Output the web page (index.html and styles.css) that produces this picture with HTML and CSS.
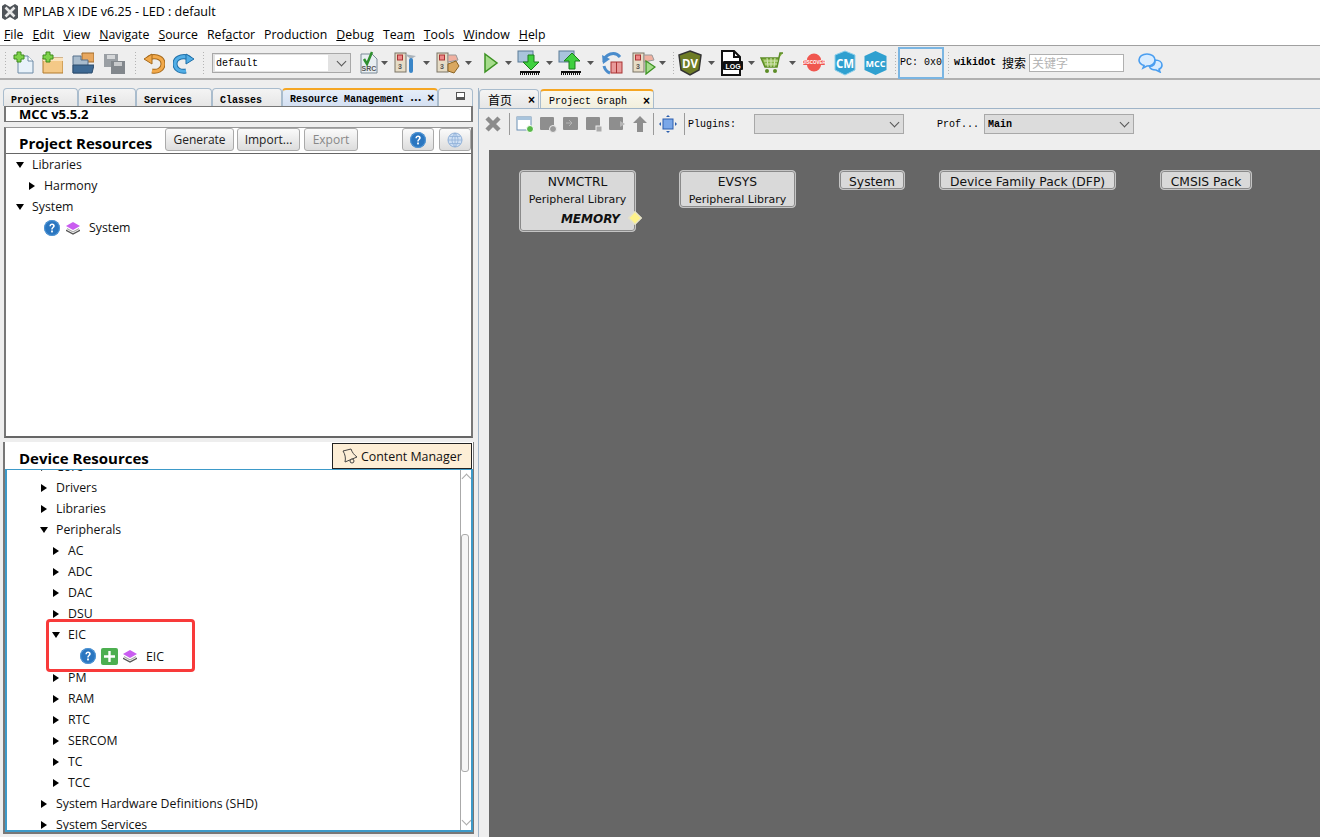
FILE: index.html
```html
<!DOCTYPE html>
<html lang="en">

<head>
  <meta charset="UTF-8">
  <meta name="viewport" content="width=device-width, initial-scale=1.0">
  <title>MPLAB X IDE v6.25 - LED : default</title>
  <link rel="stylesheet" href="styles.css">
</head>

<body>
  <svg class="defs" width="0" height="0">
    <symbol id="help" viewBox="0 0 16 16">
      <circle cx="8" cy="8" r="8" fill="#2a76c0" />
      <circle cx="8" cy="8" r="7.4" fill="none" stroke="#5c9fdc" stroke-width=".8" />
      <path d="M5.4 6.2C5.5 4.4 6.6 3.5 8.1 3.5c1.600 0 2.700 1 2.700 2.300 0 1.900-2.100 1.900-2.100 3.700H7.200C7.200 7.300 9 7.300 9 5.900 9 5.300 8.600 4.900 8 4.900c-.7 0-1 .5-1.100 1.300z" fill="#fff" />
      <rect x="7.100" y="10.500" width="1.800" height="1.900" fill="#fff" />
    </symbol>
    <symbol id="layers" viewBox="0 0 16 16">
      <path d="M1 9.500l7 3.800 7-3.800v1.500l-7 3.800-7-3.800z" fill="#555" />
      <path d="M2 8l6 3.300L14 8v1.200l-6 3.200-6-3.200z" fill="#aaa" />
      <path d="M1 6l7-4 7 4-7 4z" fill="#c95cf0" />
    </symbol>
    <symbol id="drop" viewBox="0 0 7 4">
      <path d="M0 0h7L3.500 4z" fill="#555" />
    </symbol>
  </svg>

  <header class="titlebar">
    <svg width="16" height="16" viewBox="0 0 16 16">
      <path d="M0 2l3-2 5 3 5-3 3 2v12l-3 2-5-3-5 3-3-2z" fill="#4f5459" />
      <path d="M3.500 3.500l9 9M12.500 3.500l-9 9" stroke="#e8e8e8" stroke-width="2.600" />
    </svg>
    <span>MPLAB X IDE v6.25 - LED : default</span>
  </header>

  <nav class="menubar">
    <a><u>F</u>ile</a>
    <a><u>E</u>dit</a>
    <a><u>V</u>iew</a>
    <a><u>N</u>avigate</a>
    <a><u>S</u>ource</a>
    <a>Ref<u>a</u>ctor</a>
    <a>Production</a>
    <a><u>D</u>ebug</a>
    <a>Tea<u>m</u></a>
    <a><u>T</u>ools</a>
    <a><u>W</u>indow</a>
    <a><u>H</u>elp</a>
  </nav>

  <div class="toolbar">
    <i class="grip"></i>
    <svg class="ml6" width="22" height="24" viewBox="0 0 22 24">
      <path d="M5 5h10l5 5v12H5z" fill="#e8f2fa" stroke="#6d8aa5" />
      <path d="M15 5v5h5" fill="#fff" stroke="#6d8aa5" />
      <path d="M4 1h4v3h3v4H8v3H4V8H1V4h3z" fill="#7ed34a" stroke="#3f8a1d" />
    </svg>
    <svg class="ml6" width="22" height="24" viewBox="0 0 22 24">
      <path d="M2 7h20v15H2z" fill="#f4c987" stroke="#b27a2c" />
      <path d="M2 7h20v3H2z" fill="#fbe3bd" />
      <path d="M5 1h4v3h3v4H9v3H5V8H2V4h3z" fill="#7ed34a" stroke="#3f8a1d" />
    </svg>
    <svg class="ml9" width="22" height="24" viewBox="0 0 22 24">
      <path d="M10 2h12v9H10z" fill="#e8a860" stroke="#a06b2a" />
      <path d="M1 5h8v4h7v13H1z" fill="#a9bccd" stroke="#56718c" />
      <path d="M1 14h21l-2 8H1z" fill="#3f6a94" stroke="#2d4c6c" />
    </svg>
    <svg class="ml9" width="22" height="24" viewBox="0 0 22 24">
      <rect x="1" y="3" width="14" height="13" fill="#9a9fa4" />
      <rect x="4" y="4" width="8" height="4" fill="#d5d7d9" />
      <rect x="8" y="10" width="14" height="13" fill="#82878c" />
      <rect x="11" y="11" width="8" height="4" fill="#c8cacc" />
    </svg>
    <i class="grip ml9"></i>
    <svg class="ml6" width="22" height="24" viewBox="0 0 22 24">
      <path d="M5 8c4-4 15-3 15 5 0 6-6 8-11 7" fill="none" stroke="#a66a1c" stroke-width="5" />
      <path d="M5 8c4-4 15-3 15 5 0 6-6 8-11 7" fill="none" stroke="#f2a94a" stroke-width="3" />
      <path d="M1 8l8-5v10z" fill="#f2a94a" stroke="#a66a1c" />
    </svg>
    <svg class="ml8" width="22" height="24" viewBox="0 0 22 24">
      <path d="M17 8c-4-4-15-3-15 5 0 6 6 8 11 7" fill="none" stroke="#1f6fa8" stroke-width="5" />
      <path d="M17 8c-4-4-15-3-15 5 0 6 6 8 11 7" fill="none" stroke="#52aee6" stroke-width="3" />
      <path d="M21 8l-8-5v10z" fill="#52aee6" stroke="#1f6fa8" />
    </svg>
    <i class="grip ml7"></i>
    <div class="combo combo-config ml7"><span class="combo-text">default</span><b class="chev"></b></div>
    <svg class="ml9" width="18" height="24" viewBox="0 0 18 24">
      <path d="M1 3h11l5 5v14H1z" fill="#e8eef2" stroke="#7a8a96" />
      <text x="1.500" y="20" class="icon-tag">SRC</text>
      <path d="M4 8l3 5 5-12" fill="none" stroke="#2f8f2f" stroke-width="2.500" />
    </svg>
    <svg class="arrow ml3" width="7" height="4"><use href="#drop" /></svg>
    <svg class="ml6" width="24" height="24" viewBox="0 0 24 24">
      <rect x="1" y="2" width="11" height="19" fill="#e6dcc6" stroke="#7a7466" />
      <rect x="3.500" y="4" width="5" height="5" fill="#e88" stroke="#a33" />
      <text x="4" y="18" class="icon-tag">3</text>
      <path d="M10 3l12 2-5 3z" fill="#aab2ba" />
      <rect x="15" y="7" width="4" height="15" rx="2" fill="#3a86c8" />
    </svg>
    <svg class="arrow ml5" width="7" height="4"><use href="#drop" /></svg>
    <svg class="ml6" width="24" height="24" viewBox="0 0 24 24">
      <rect x="1" y="2" width="11" height="19" fill="#e6dcc6" stroke="#7a7466" />
      <rect x="3.500" y="4" width="5" height="5" fill="#e88" stroke="#a33" />
      <text x="4" y="18" class="icon-tag">3</text>
      <path d="M12 4h8l2 5-10 2z" fill="#f0b0a0" stroke="#999" />
      <path d="M12 13l8-3 3 5-5 7-6-2z" fill="#d9a860" stroke="#8a6424" />
    </svg>
    <svg class="arrow ml5" width="7" height="4"><use href="#drop" /></svg>
    <svg class="ml11" width="16" height="24" viewBox="0 0 16 24">
      <path d="M2 3l12 9-12 9z" fill="#a6dc8c" stroke="#3c9222" stroke-width="1.500" />
    </svg>
    <svg class="arrow ml6" width="7" height="4"><use href="#drop" /></svg>
    <svg class="ml5" width="26" height="26" viewBox="0 0 26 26">
      <rect x="1" y="1" width="15" height="11" fill="#a9c4dc" stroke="#5a7a96" />
      <path d="M11 5h6v7h5l-8 8-8-8h5z" fill="#3fd03f" stroke="#1c7f1c" />
      <rect x="3" y="21" width="20" height="2" fill="#111" />
      <path d="M3 24h20" stroke="#111" stroke-dasharray="1 1" stroke-width="2" />
    </svg>
    <svg class="arrow ml3" width="7" height="4"><use href="#drop" /></svg>
    <svg class="ml5" width="26" height="26" viewBox="0 0 26 26">
      <rect x="1" y="1" width="15" height="11" fill="#a9c4dc" stroke="#5a7a96" />
      <path d="M14 3l8 8h-5v8h-6v-8H6z" fill="#3fd03f" stroke="#1c7f1c" />
      <rect x="3" y="21" width="20" height="2" fill="#111" />
      <path d="M3 24h20" stroke="#111" stroke-dasharray="1 1" stroke-width="2" />
    </svg>
    <svg class="arrow ml3" width="7" height="4"><use href="#drop" /></svg>
    <svg class="ml6" width="24" height="24" viewBox="0 0 24 24">
      <path d="M4 11A9 9 0 0 1 20 6" fill="none" stroke="#4a8ccc" stroke-width="3" />
      <path d="M2 4l1 9 7-5z" fill="#4a8ccc" />
      <path d="M4 15c1 4 3 6 6 7" fill="none" stroke="#4a8ccc" stroke-width="3" />
      <rect x="11" y="11" width="11" height="11" fill="#e89a9a" stroke="#a33" />
      <path d="M16.500 11v11" stroke="#a33" />
    </svg>
    <svg class="ml8" width="24" height="24" viewBox="0 0 24 24">
      <rect x="1" y="2" width="11" height="19" fill="#e6dcc6" stroke="#7a7466" />
      <rect x="3.500" y="4" width="5" height="5" fill="#e88" stroke="#a33" />
      <text x="4" y="18" class="icon-tag">3</text>
      <path d="M12 4h8l2 5-10 2z" fill="#f0b0a0" stroke="#999" />
      <path d="M14 10l9 6-9 7z" fill="#a6dc8c" stroke="#3c9222" stroke-width="1.300" />
    </svg>
    <svg class="arrow ml3" width="7" height="4"><use href="#drop" /></svg>
    <i class="grip ml6"></i>
    <svg class="ml3" width="24" height="26" viewBox="0 0 24 26">
      <path d="M12 1l11 4-2 15-9 5-9-5L1 5z" fill="#6d7c25" stroke="#333" stroke-width="1.500" />
      <text x="12" y="18" class="icon-badge">DV</text>
    </svg>
    <svg class="arrow ml6" width="7" height="4"><use href="#drop" /></svg>
    <svg class="ml4" width="24" height="26" viewBox="0 0 24 26">
      <path d="M3 1h12l6 6v18H3z" fill="#fff" stroke="#111" stroke-width="2" />
      <path d="M15 1v6h6" fill="none" stroke="#111" stroke-width="2" />
      <rect x="4" y="11" width="20" height="9" rx="1" fill="#111" />
      <text x="14" y="18.500" class="icon-log">LOG</text>
    </svg>
    <svg class="arrow ml5" width="7" height="4"><use href="#drop" /></svg>
    <svg class="ml5" width="24" height="24" viewBox="0 0 24 24">
      <path d="M23 2h-3l-3 14H5L1 7h18" fill="#8dbb4d" stroke="#5c8c26" stroke-width="1.500" />
      <path d="M4 10h14M5 13h12M7 7l1 9M11 7v9M15 7l-1 9" stroke="#d6e6b8" />
      <circle cx="7" cy="20" r="2" fill="#5c8c26" />
      <circle cx="15" cy="20" r="2" fill="#5c8c26" />
    </svg>
    <svg class="arrow ml5" width="7" height="4"><use href="#drop" /></svg>
    <svg class="ml6" width="24" height="24" viewBox="0 0 24 24">
      <path d="M5 9a7 6.500 0 0 1 14 0zM5 14h14a7 6.500 0 0 1-14 0z" fill="#f0564f" />
      <rect x="1" y="9" width="22" height="5" rx="1" fill="#f0564f" />
      <text x="12" y="13" class="icon-tiny">DISCOVER</text>
    </svg>
    <svg class="ml7" width="24" height="26" viewBox="0 0 24 26">
      <path d="M12 1l10 4v15l-10 5-10-5V5z" fill="#2fa0d0" stroke="#8ed0ec" />
      <text x="12" y="17.500" class="icon-badge">CM</text>
    </svg>
    <svg class="ml6" width="25" height="26" viewBox="0 0 25 26">
      <path d="M12.500 1l11 5v14l-11 5-11-5V6z" fill="#2fa0d0" />
      <text x="12.500" y="17" class="icon-badge icon-narrow">MCC</text>
    </svg>
    <i class="grip ml6"></i>
    <div class="pc-box ml1"><span>PC:</span><span>0x0</span></div>
    <i class="grip ml3"></i>
    <span class="wiki ml4">wikidot</span>
    <span class="search-label ml6">搜索</span>
    <input class="search-box ml3" type="text" placeholder="关键字">
    <svg class="ml14" width="25" height="20" viewBox="0 0 25 20">
      <path d="M9 1c4.500 0 8 2.500 8 6s-3.500 6-8 6l-4 2 1-2.500C3 11.500 1 9.500 1 7c0-3.500 3.500-6 8-6z" fill="#d8ecff" stroke="#4a9ef0" stroke-width="1.600" />
      <path d="M17 7c4 0 7 2 7 5 0 2-1 3.500-3 4.300l1 2.700-4-2c-3.500 0-6-1.500-6.500-3.500 4 0 6-2.500 5.500-6.500z" fill="#d8ecff" stroke="#4a9ef0" stroke-width="1.600" />
    </svg>
  </div>

  <main class="workspace">
    <section class="left">
      <div class="tabs left-tabs">
        <div class="tab tab-projects">Projects</div>
        <div class="tab tab-files">Files</div>
        <div class="tab tab-services">Services</div>
        <div class="tab tab-classes">Classes</div>
        <div class="tab tab-active tab-resource"><span>Resource Management</span><b class="dots">•••</b><b class="close">×</b></div>
        <div class="tab-end"><i class="minimize"></i></div>
      </div>

      <div class="mcc-bar">MCC v5.5.2</div>

      <div class="panel project-panel">
        <div class="panel-head">
          <h2>Project Resources</h2>
          <div class="head-buttons">
            <button class="btn btn-generate">Generate</button>
            <button class="btn btn-import">Import...</button>
            <button class="btn btn-export" disabled>Export</button>
            <button class="btn btn-icon btn-help"><svg width="16" height="16"><use href="#help" /></svg></button>
            <button class="btn btn-icon btn-globe">
              <svg width="16" height="16" viewBox="0 0 16 16">
                <circle cx="8" cy="8" r="7" fill="#cfe0f4" stroke="#8fb0d8" />
                <path d="M1 8h14M2.500 4.500h11M2.500 11.500h11M8 1v14M8 1C4 5 4 11 8 15M8 1c4 4 4 10 0 14" fill="none" stroke="#8fb0d8" stroke-width=".8" />
              </svg>
            </button>
          </div>
        </div>
        <div class="tree tree-project">
          <div class="row p0"><i class="tri-down"></i><span>Libraries</span></div>
          <div class="row p1"><i class="tri-right"></i><span>Harmony</span></div>
          <div class="row p0"><i class="tri-down"></i><span>System</span></div>
          <div class="row p2">
            <svg class="ic" width="16" height="16"><use href="#help" /></svg>
            <svg class="ic ic-layers" width="16" height="16"><use href="#layers" /></svg>
            <span class="leaf">System</span>
          </div>
        </div>
      </div>

      <div class="panel device-panel">
        <div class="panel-head device-head">
          <h2>Device Resources</h2>
          <button class="content-manager">
            <svg width="18" height="16" viewBox="0 0 18 16">
              <path d="M3 3l8-2c1 3 3 6 6 8l-12 5C6 10 5 6 3 3z" fill="none" stroke="#444" />
              <circle cx="12" cy="13" r="2" fill="#fdeed6" stroke="#444" />
            </svg>
            <span>Content Manager</span>
          </button>
        </div>
        <div class="device-body">
          <div class="tree tree-device">
            <div class="row d0"><i class="tri-right"></i><span>Core</span></div>
            <div class="row d0"><i class="tri-right"></i><span>Drivers</span></div>
            <div class="row d0"><i class="tri-right"></i><span>Libraries</span></div>
            <div class="row d0"><i class="tri-down"></i><span>Peripherals</span></div>
            <div class="row d1"><i class="tri-right"></i><span>AC</span></div>
            <div class="row d1"><i class="tri-right"></i><span>ADC</span></div>
            <div class="row d1"><i class="tri-right"></i><span>DAC</span></div>
            <div class="row d1"><i class="tri-right"></i><span>DSU</span></div>
            <div class="row d1"><i class="tri-down"></i><span>EIC</span></div>
            <div class="row d2">
              <svg class="ic" width="16" height="16"><use href="#help" /></svg>
              <svg class="ic ic-add" width="17" height="17" viewBox="0 0 17 17">
                <rect width="17" height="17" rx="2" fill="#4caf50" />
                <path d="M8.500 3v11M3 8.500h11" stroke="#fff" stroke-width="2.400" />
              </svg>
              <svg class="ic ic-layers-small" width="16" height="16"><use href="#layers" /></svg>
              <span class="leaf">EIC</span>
            </div>
            <div class="row d1"><i class="tri-right"></i><span>PM</span></div>
            <div class="row d1"><i class="tri-right"></i><span>RAM</span></div>
            <div class="row d1"><i class="tri-right"></i><span>RTC</span></div>
            <div class="row d1"><i class="tri-right"></i><span>SERCOM</span></div>
            <div class="row d1"><i class="tri-right"></i><span>TC</span></div>
            <div class="row d1"><i class="tri-right"></i><span>TCC</span></div>
            <div class="row d0"><i class="tri-right"></i><span>System Hardware Definitions (SHD)</span></div>
            <div class="row d0"><i class="tri-right"></i><span>System Services</span></div>
          </div>
          <div class="scrollbar">
            <b class="chev chev-up"></b>
            <div class="scroll-track"><div class="scroll-thumb"></div></div>
            <b class="chev"></b>
          </div>
          <div class="highlight"></div>
        </div>
      </div>
    </section>

    <section class="right">
      <div class="tabs right-tabs">
        <div class="tab tab-home"><span class="cjk">首页</span><b class="close">×</b></div>
        <div class="tab tab-active tab-graph"><span>Project Graph</span><b class="close">×</b></div>
      </div>
      <div class="graph-toolbar">
        <svg width="18" height="18" viewBox="0 0 18 18">
          <path d="M3 3l12 12M15 3L3 15" stroke="#8c8c8c" stroke-width="4.500" />
        </svg>
        <i class="vsep vsep-first"></i>
        <svg class="g-first" width="18" height="18" viewBox="0 0 18 18">
          <rect x="1" y="2" width="14" height="13" fill="#fff" stroke="#6b8fb4" />
          <rect x="1" y="2" width="14" height="3" fill="#a9c4dc" />
          <circle cx="14" cy="14" r="3.500" fill="#58b848" stroke="#fff" />
        </svg>
        <svg class="g-icon" width="18" height="18" viewBox="0 0 18 18">
          <rect x="1" y="2" width="14" height="13" rx="1" fill="#8e8e8e" />
          <circle cx="14" cy="14" r="3.500" fill="#9a9a9a" stroke="#eee" />
        </svg>
        <svg class="g-icon" width="18" height="18" viewBox="0 0 18 18">
          <rect x="1" y="2" width="15" height="13" rx="1" fill="#8e8e8e" />
          <path d="M4 8h5M7 5l3 3-3 3" stroke="#b5b5b5" fill="none" />
        </svg>
        <svg class="g-icon" width="18" height="18" viewBox="0 0 18 18">
          <rect x="1" y="2" width="14" height="13" rx="1" fill="#8e8e8e" />
          <rect x="11" y="11" width="6" height="6" fill="#aaa" stroke="#eee" />
        </svg>
        <svg class="g-icon" width="18" height="18" viewBox="0 0 18 18">
          <rect x="1" y="2" width="14" height="13" rx="1" fill="#8e8e8e" />
          <path d="M17 9l-5 3V6z" fill="#b5b5b5" />
        </svg>
        <svg class="g-icon" width="18" height="18" viewBox="0 0 18 18">
          <path d="M9 1l7 7h-4v9H6V8H2z" fill="#8e8e8e" />
        </svg>
        <i class="vsep vsep-mid"></i>
        <svg class="g-fit" width="18" height="18" viewBox="0 0 18 18">
          <rect x="4" y="4" width="10" height="10" fill="#7aa7e8" stroke="#2c5fae" />
          <path d="M9 0l2 2H7zM9 18l2-2H7zM0 9l2-2v4zM18 9l-2-2v4z" fill="#2c5fae" />
        </svg>
        <i class="vsep vsep-last"></i>
        <span class="g-label">Plugins:</span>
        <div class="combo combo-plugins"><span class="combo-text"></span><b class="chev"></b></div>
        <span class="g-label g-prof">Prof...</span>
        <div class="combo combo-main"><span class="combo-text">Main</span><b class="chev"></b></div>
      </div>
      <div class="canvas">
        <div class="node node-nvm">
          <div class="node-title">NVMCTRL</div>
          <div class="node-sub">Peripheral Library</div>
          <div class="node-cap">MEMORY</div>
          <i class="port"></i>
        </div>
        <div class="node node-evsys">
          <div class="node-title">EVSYS</div>
          <div class="node-sub">Peripheral Library</div>
        </div>
        <div class="node node-system"><div class="node-title">System</div></div>
        <div class="node node-dfp"><div class="node-title">Device Family Pack (DFP)</div></div>
        <div class="node node-cmsis"><div class="node-title">CMSIS Pack</div></div>
      </div>
    </section>
  </main>
</body>

</html>
```

FILE: styles.css
```css
html {
  font-family: "Open Sans", "Noto Sans CJK SC", sans-serif;
}

body {
  margin: 0;
  width: 1320px;
  height: 837px;
  overflow: hidden;
  background-color: #eeeeee;
  color: #000;
  font-size: 12.3px;
}

.defs {
  position: absolute;
}

svg {
  flex: none;
  display: block;
}

/* spacing helpers for the toolbar */
.ml1 { margin-left: 1px; }
.ml3 { margin-left: 3px; }
.ml4 { margin-left: 4px; }
.ml5 { margin-left: 5px; }
.ml6 { margin-left: 6px; }
.ml7 { margin-left: 7px; }
.ml8 { margin-left: 8px; }
.ml9 { margin-left: 9px; }
.ml11 { margin-left: 11px; }
.ml14 { margin-left: 14px; }

/* title and menu */
.titlebar {
  height: 23px;
  background-color: #fff;
  display: flex;
  align-items: center;
  gap: 5px;
  padding-left: 2px;
  font-size: 12.5px;
}

.menubar {
  height: 22px;
  background-color: #fff;
  border-bottom: 1px solid #a0a0a0;
  display: flex;
  align-items: center;
  gap: 9px;
  padding-left: 4px;
  font-size: 12.3px;
}

/* main toolbar */
.toolbar {
  height: 31px;
  padding: 1px 0 0 4px;
  border-bottom: 2px solid #b0b0b0;
  display: flex;
  align-items: center;
}

.grip {
  width: 3px;
  height: 24px;
  flex: none;
  background-image: radial-gradient(#b4b4b4 1px, transparent 1px);
  background-size: 3px 3px;
}

.combo {
  height: 20px;
  box-sizing: border-box;
  border: 1px solid #a8a8a8;
  background-color: #e2e2e2;
  display: flex;
  align-items: center;
  justify-content: space-between;
  font-family: "Liberation Mono", monospace;
  font-size: 10px;
  flex: none;
}

.combo-text {
  padding-left: 3px;
}

.combo-config {
  width: 139px;
}

.combo-config .combo-text {
  background-color: #fff;
  width: 113px;
  box-sizing: border-box;
  height: 16px;
  line-height: 18px;
  margin-left: 2px;
  padding-left: 1px;
}

.chev {
  width: 6px;
  height: 6px;
  border-right: 1px solid #555;
  border-bottom: 1px solid #555;
  transform: rotate(45deg);
  margin: -3px 5px 0;
  flex: none;
}

.chev-up {
  transform: rotate(225deg);
  margin: 2px 0 0;
  border-color: #aaa;
}

.icon-tag {
  font-family: "Liberation Sans", sans-serif;
  font-size: 7px;
  font-weight: bold;
  fill: #555;
}

.icon-badge {
  font-family: "Open Sans", sans-serif;
  font-size: 11.500px;
  font-weight: bold;
  fill: #fff;
  text-anchor: middle;
}

.icon-narrow {
  font-size: 9px;
}

.icon-log {
  font-family: "Liberation Sans", sans-serif;
  font-size: 7px;
  font-weight: bold;
  fill: #fff;
  text-anchor: middle;
}

.icon-tiny {
  font-family: "Liberation Sans", sans-serif;
  font-size: 4.500px;
  font-weight: bold;
  fill: #fff;
  text-anchor: middle;
}

.pc-box {
  width: 46px;
  height: 32px;
  box-sizing: border-box;
  border: 2px solid #7ab5e2;
  display: flex;
  align-items: center;
  justify-content: space-between;
  font-family: "Liberation Mono", monospace;
  font-size: 10px;
  flex: none;
}

.wiki {
  font-family: "Liberation Mono", monospace;
  font-size: 10px;
  font-weight: bold;
}

.search-label {
  font-size: 12px;
  font-family: "Noto Sans CJK SC", sans-serif;
}

.search-box {
  width: 95px;
  height: 18px;
  box-sizing: border-box;
  border: 1px solid #b0b0b0;
  padding: 0 2px;
  font-family: "Noto Sans CJK SC", sans-serif;
  font-size: 12px;
  outline: none;
}

.search-box::placeholder {
  color: #b4b4b4;
}

/* workspace */
.workspace {
  display: flex;
  height: 757px;
  gap: 4px;
  padding: 8px 0 0 3px;
  box-sizing: border-box;
}

.left {
  width: 471px;
  flex: none;
}

.right {
  flex: 1;
  display: flex;
  flex-direction: column;
  border-left: 1px solid #9fb4c8;
}

.tabs {
  display: flex;
  height: 18px;
  font-family: "Liberation Mono", monospace;
  font-size: 10px;
  font-weight: bold;
}

.left-tabs {
  margin-right: 1px;
}

.tab {
  box-sizing: border-box;
  border: 1px solid #a9bccd;
  border-bottom: none;
  border-radius: 4px 4px 0 0;
  background: linear-gradient(#f4f4f4, #e6e6e6);
  padding: 6px 0 0 7px;
}

.tab-projects { width: 75px; }
.tab-files { width: 58px; }
.tab-services { width: 76px; }
.tab-classes { width: 70px; }

.tab-active {
  border-top: 2px solid #f5a623;
  padding-top: 3px;
}

.tab-resource {
  width: 156px;
  background: linear-gradient(#e6eef9, #d4e0f2);
  white-space: nowrap;
  display: flex;
  align-items: baseline;
}

.dots {
  font-size: 7px;
  letter-spacing: -.5px;
  margin-left: 6px;
}

.close {
  font-family: "Liberation Sans", sans-serif;
  font-size: 12px;
  line-height: 10px;
}

.tab-resource .close {
  margin-left: 6px;
}

.tab-end {
  flex: 1;
  box-sizing: border-box;
  border: 1px solid #a9bccd;
  border-bottom: none;
  border-radius: 4px 4px 0 0;
  background-color: #f0f0f0;
  display: flex;
  justify-content: flex-end;
  padding: 3px 7px 0 0;
}

.minimize {
  width: 9px;
  height: 8px;
  border: 1px solid #555;
  box-sizing: border-box;
  border-bottom-width: 3px;
  background-color: #fff;
}

.mcc-bar {
  height: 16px;
  box-sizing: border-box;
  background-color: #fff;
  border: 1px solid #777;
  border-width: 1px 2px;
  margin: 0 1px;
  padding-left: 13px;
  font-weight: bold;
  font-size: 13px;
  line-height: 14px;
  color: #000;
}

.panel {
  margin-left: 1px;
  background-color: #fff;
  border: 1px solid #777;
  border-width: 0 2px;
}

.project-panel {
  margin: 5px 1px 0;
  height: 311px;
  box-sizing: border-box;
  border-bottom: 2px solid #666;
  border-top: 1px solid #999;
}

.panel-head {
  height: 25px;
  display: flex;
  justify-content: space-between;
  align-items: flex-start;
  border-bottom: 1px solid #666;
  box-sizing: content-box;
}

h2 {
  margin: 0;
  padding: 5px 0 0 13px;
  font-size: 15px;
  font-weight: bold;
  line-height: 20px;
}

.head-buttons {
  display: flex;
  gap: 3px;
}

.btn {
  height: 23px;
  box-sizing: border-box;
  border: 1px solid #aaa;
  border-radius: 3px;
  background: linear-gradient(#fbfbfb, #dcdcdc);
  font-family: "Open Sans", sans-serif;
  font-size: 12px;
  padding: 0;
  color: #222;
}

.btn-generate { width: 69px; }
.btn-import { width: 63px; }
.btn-export { width: 54px; margin-left: 1px; color: #888; }
.btn-icon { width: 32px; display: flex; align-items: center; justify-content: center; }
.btn-help { margin-left: 41px; }
.btn-globe { margin-left: 2px; }

.row {
  height: 21px;
  display: flex;
  align-items: center;
  white-space: nowrap;
  color: #111;
}

.row span {
  line-height: 21px;
}

.tri-down {
  width: 0;
  height: 0;
  border: 4px solid transparent;
  border-top: 6px solid #000;
  border-bottom: none;
  margin-right: 8px;
  flex: none;
}

.tri-right {
  width: 0;
  height: 0;
  border: 4px solid transparent;
  border-left: 6px solid #000;
  border-right: none;
  margin: 0 9px 0 1px;
  flex: none;
}

.p0 { padding-left: 10px; }
.p1 { padding-left: 22px; }
.p2 { padding-left: 38px; }

.ic-layers { margin-left: 5px; }
.leaf { margin-left: 8px; }

.device-panel {
  margin: 4px 0 0;
  height: 392px;
  box-sizing: border-box;
  border-color: #777;
  border-width: 0 1px 2px 2px;
}

.device-head {
  height: 26px;
  border-bottom: none;
  padding-top: 1px;
  align-items: stretch;
}

.device-head h2 {
  padding: 5px 0 0 14px;
}

.content-manager {
  width: 140px;
  height: 26px;
  margin-right: 1px;
  box-sizing: border-box;
  border: 1px solid #222;
  background-color: #fdeed6;
  display: flex;
  align-items: center;
  gap: 3px;
  padding: 0 0 0 7px;
  font-family: "Open Sans", sans-serif;
  font-size: 12.4px;
  color: #111;
}

.device-body {
  position: relative;
  height: 363px;
  box-sizing: border-box;
  display: flex;
  overflow: hidden;
  border: 2px solid #3d9ac9;
  border-width: 1px 2px 2px;
}

.tree-device {
  flex: 1;
  margin-top: -14px;
}

.d0 { padding-left: 33px; }
.d1 { padding-left: 45px; }
.d2 { padding-left: 73px; height: 22px; }

.d2 .ic-add { margin-left: 5px; }
.d2 .ic-layers-small { margin-left: 4px; }

.scrollbar {
  width: 11px;
  flex: none;
  border-left: 1px solid #aaa;
  display: flex;
  flex-direction: column;
  align-items: center;
  padding-top: 3px;
  box-sizing: border-box;
}

.scroll-track {
  flex: 1;
  width: 100%;
  padding-top: 52px;
  box-sizing: border-box;
}

.scroll-thumb {
  width: 8px;
  height: 238px;
  box-sizing: border-box;
  border: 1px solid #aaa;
  border-radius: 3px;
  background-color: #f6f6f6;
}

.scrollbar .chev:last-child {
  margin: 0 0 6px;
  border-color: #aaa;
}

.highlight {
  position: absolute;
  left: 39px;
  top: 149px;
  width: 149px;
  height: 53px;
  box-sizing: border-box;
  border: 3px solid #f83a3a;
  border-radius: 4px;
}

/* right side */
.right-tabs {
  height: 19px;
  font-weight: normal;
  margin-top: 1px;
}

.tab-home {
  width: 60px;
  display: flex;
  justify-content: space-between;
  padding: 2px 3px 0 8px;
}

.tab-home .close {
  padding-top: 3px;
}

.cjk {
  font-family: "Noto Sans CJK SC", sans-serif;
  font-size: 12px;
  line-height: 15px;
}

.tab-graph {
  width: 114px;
  margin-left: 1px;
  display: flex;
  justify-content: space-between;
  padding: 5px 3px 0 8px;
  background: linear-gradient(#faf8ee, #f2efdd);
  border-color: #a9bccd;
  border-top-color: #f5a623;
}

.right-tabs .close {
  font-weight: bold;
}

.graph-toolbar {
  height: 30px;
  padding: 0 0 2px 5px;
  border-top: 1px solid #9fb4c8;
  display: flex;
  align-items: center;
  flex: none;
}

.vsep {
  width: 1px;
  height: 22px;
  background-color: #9a9a9a;
  flex: none;
}

.vsep-first { margin-left: 7px; }
.g-first { margin-left: 6px; }
.g-icon { margin-left: 5px; }
.vsep-mid { margin-left: 4px; }
.g-fit { margin-left: 5px; }
.vsep-last { margin-left: 7px; }

.g-label {
  font-family: "Liberation Mono", monospace;
  font-size: 10px;
  margin-left: 3px;
  padding-top: 1px;
}

.combo-plugins {
  width: 150px;
  margin-left: 18px;
  background-color: #dcdcdc;
}

.g-prof {
  margin-left: 33px;
}

.combo-main {
  width: 150px;
  margin-left: 5px;
  background-color: #dcdcdc;
}

.combo-main .combo-text {
  padding-left: 3px;
  font-weight: bold;
}

.canvas {
  position: relative;
  flex: 1;
  margin: 9px 0 0 10px;
  background-color: #666666;
}

.node {
  position: absolute;
  top: 20px;
  box-sizing: border-box;
  padding-top: 2px;
  border: 1px solid #c4c4c4;
  border-radius: 4px;
  background-color: #d9d9d9;
  box-shadow: inset 0 0 0 1px #8a8a8a;
  text-align: center;
  color: #111;
  font-family: "DejaVu Sans", sans-serif;
}

.node-title {
  font-size: 12.300px;
  line-height: 18px;
}

.node-sub {
  font-size: 11px;
  line-height: 18px;
}

.node-cap {
  font-size: 12px;
  font-weight: bold;
  font-style: italic;
  text-align: right;
  padding-right: 15px;
  line-height: 20px;
}

.node-nvm { left: 30px; width: 117px; height: 62px; }
.node-evsys { left: 190px; width: 117px; height: 38px; }
.node-system { left: 350px; width: 66px; height: 20px; }
.node-dfp { left: 450px; width: 177px; height: 20px; }
.node-cmsis { left: 671px; width: 92px; height: 20px; }

.port {
  position: absolute;
  right: -5px;
  top: 42px;
  width: 8px;
  height: 8px;
  background-color: #fdf28c;
  border: 1px solid #ddd;
  transform: rotate(45deg);
}
```
